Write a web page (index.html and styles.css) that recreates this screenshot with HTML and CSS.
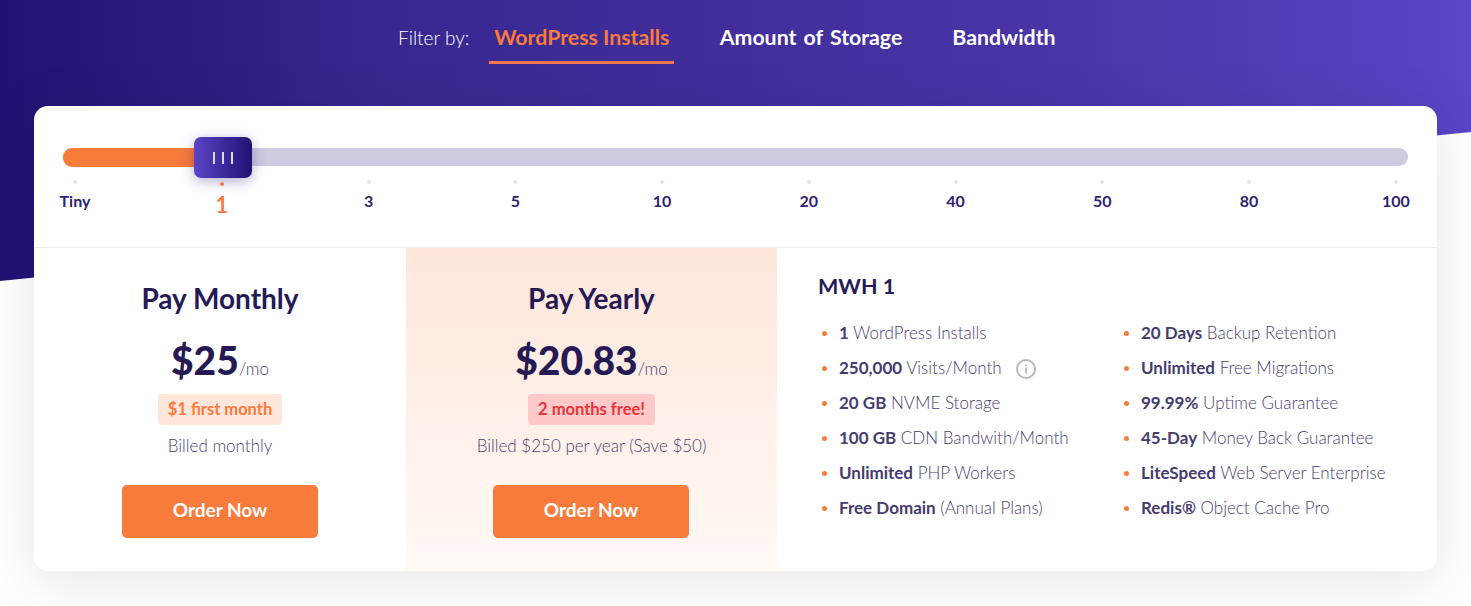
FILE: index.html
```html
<!DOCTYPE html>
<html lang="en">
<head>
<meta charset="utf-8">
<title>Plans</title>
<link rel="stylesheet" href="styles.css">
</head>
<body>
<div class="banner"></div>
<main class="page">
  <nav class="filters">
    <span class="filter-label">Filter by:</span>
    <a class="tab tab-active">WordPress Installs</a>
    <a class="tab">Amount of Storage</a>
    <a class="tab">Bandwidth</a>
  </nav>
  <section class="card">
    <div class="slider">
      <div class="track">
        <div class="fill"></div>
        <div class="handle"><i></i><i></i><i></i></div>
      </div>
      <ul class="ticks">
        <li class="tick"><b></b>Tiny</li>
        <li class="tick tick-active"><b></b><span>1</span></li>
        <li class="tick"><b></b>3</li>
        <li class="tick"><b></b>5</li>
        <li class="tick"><b></b>10</li>
        <li class="tick"><b></b>20</li>
        <li class="tick"><b></b>40</li>
        <li class="tick"><b></b>50</li>
        <li class="tick"><b></b>80</li>
        <li class="tick"><b></b>100</li>
      </ul>
    </div>
    <div class="plans">
      <div class="plan">
        <h2>Pay Monthly</h2>
        <p class="price"><strong>$25</strong><span>/mo</span></p>
        <p class="badge badge-orange">$1 first month</p>
        <p class="billed">Billed monthly</p>
        <a class="order">Order Now</a>
      </div>
      <div class="plan plan-yearly">
        <h2>Pay Yearly</h2>
        <p class="price"><strong>$20.83</strong><span>/mo</span></p>
        <p class="badge badge-red">2 months free!</p>
        <p class="billed">Billed $250 per year (Save $50)</p>
        <a class="order">Order Now</a>
      </div>
      <div class="features">
        <h3>MWH 1</h3>
        <div class="feature-cols">
          <ul class="feature-list">
            <li><b>1</b> WordPress Installs</li>
            <li><b>250,000</b> Visits/Month<svg class="info" viewBox="0 0 20 20" width="20" height="20" aria-hidden="true"><circle cx="10" cy="10" r="9" fill="none" stroke="#b9b9b9" stroke-width="2"/><rect x="9.1" y="8.6" width="1.8" height="6" fill="#b9b9b9"/><rect x="9.1" y="5.4" width="1.8" height="1.8" fill="#b9b9b9"/></svg></li>
            <li><b>20 GB</b> NVME Storage</li>
            <li><b>100 GB</b> CDN Bandwith/Month</li>
            <li><b>Unlimited</b> PHP Workers</li>
            <li><b>Free Domain</b> (Annual Plans)</li>
          </ul>
          <ul class="feature-list">
            <li><b>20 Days</b> Backup Retention</li>
            <li><b>Unlimited</b> Free Migrations</li>
            <li><b>99.99%</b> Uptime Guarantee</li>
            <li><b>45-Day</b> Money Back Guarantee</li>
            <li><b>LiteSpeed</b> Web Server Enterprise</li>
            <li><b>Redis®</b> Object Cache Pro</li>
          </ul>
        </div>
      </div>
    </div>
  </section>
</main>
</body>
</html>
```
FILE: styles.css
```css
* { box-sizing: border-box; }
html, body { margin: 0; padding: 0; }
body {
  position: relative;
  width: 100%;
  height: 606px;
  overflow: hidden;
  background: #fff;
  font-family: Lato, "Noto Sans", sans-serif;
  color: #261a55;
}
ul { list-style: none; margin: 0; padding: 0; }
p, h2, h3 { margin: 0; }

.banner {
  position: absolute;
  inset: 0 0 auto 0;
  height: 283px;
  background: linear-gradient(90deg, #1f1274 0%, #38278f 26%, #4a35a8 73%, #5b44c6 100%);
  clip-path: polygon(0 0, 100% 0, 100% 132px, 0 281px);
}
.page {
  position: relative;
  padding: 0 34px;
}
.filters {
  display: flex;
  align-items: flex-start;
  justify-content: flex-start;
  height: 106px;
  padding: 16px 0 0 364px;
  color: #fff;
}
.filter-label {
  font-size: 19px;
  line-height: 43px;
  margin-right: 20px;
  font-weight: 300;
}
.tab {
  height: 48px;
  padding: 0 4.5px;
  margin-right: 41px;
  font-size: 21.3px;
  word-spacing: 2px;
  line-height: 43px;
  font-weight: 700;
  color: #fff;
}
.tab-active {
  width: 185px;
  padding: 0 5px;
  word-spacing: 0;
  white-space: nowrap;
  color: #fb7a3c;
  border-bottom: 3px solid #f4784a;
}

.card {
  width: 1403px;
  height: 465px;
  background: #fff;
  border-radius: 14px;
  box-shadow: 0 10px 60px rgba(0, 0, 0, .1);
  overflow: hidden;
}
.slider {
  height: 142px;
  padding: 42px 21px 0;
  border-bottom: 1px solid #ececf0;
}
.track {
  position: relative;
  height: 18px;
  margin: 0 8px;
  border-radius: 9px;
  background: #cfcadf;
}
.fill {
  width: 135px;
  height: 19px;
  background: #f87b3c;
  border-radius: 9px 0 0 9px;
}
.handle {
  position: absolute;
  left: 131px;
  top: -11px;
  width: 58px;
  height: 41px;
  border-radius: 7px;
  background: linear-gradient(90deg, #5b44c6, #1f1274);
  box-shadow: 0 3px 14px rgba(31, 18, 116, .35);
  display: flex;
  align-items: center;
  justify-content: center;
  gap: 7px;
}
.handle i {
  width: 2px;
  height: 12px;
  background: #dcd8ee;
}
.ticks {
  display: flex;
  justify-content: space-between;
  width: 1361px;
  margin-top: 14px;
}
.tick {
  position: relative;
  width: 40px;
  display: flex;
  flex-direction: column;
  align-items: center;
  font-size: 16px;
  font-weight: 700;
  line-height: 20px;
  color: #2f2270;
  white-space: nowrap;
}
.tick b {
  width: 4px;
  height: 4px;
  border-radius: 50%;
  background: #e4e1f2;
  margin-bottom: 7px;
}
.tick-active b {
  background: #f4784a;
  margin-top: 2px;
  margin-bottom: 7px;
}
.tick-active span {
  font-size: 22px;
  font-weight: 700;
  line-height: 24px;
  color: #fa7b45;
}

.plans {
  display: flex;
  height: 323px;
}
.plan {
  width: 372px;
  display: flex;
  flex-direction: column;
  align-items: center;
  padding-top: 32px;
}
.plan-yearly {
  width: 371px;
  background: linear-gradient(180deg, #ffe6db 0%, #fff9f5 100%);
}
.plan-yearly .order { margin-right: 1px; }
.plan h2 {
  font-size: 28px;
  line-height: 36px;
  font-weight: 700;
  color: #261a55;
}
.price {
  display: flex;
  align-items: baseline;
  margin-top: 21px;
  line-height: 46px;
}
.price strong {
  font-size: 39px;
  font-weight: 900;
  color: #261a55;
}
.price span {
  font-size: 17px;
  font-weight: 300;
  color: #4a4170;
}
.badge {
  margin-top: 2px;
  height: 31px;
  padding: 0 10px;
  border-radius: 4px;
  font-size: 16.5px;
  font-weight: 700;
  line-height: 30px;
}
.badge-orange { background: #ffe6db; color: #fb7a3c; }
.badge-red { background: #ffc9c9; color: #e8333c; }
.billed {
  margin-top: 10px;
  font-size: 17px;
  line-height: 22px;
  font-weight: 300;
  color: #4a4170;
}
.order {
  width: 196px;
  height: 53px;
  margin-top: 28px;
  border-radius: 5px;
  background: #f87b3c;
  color: #fff;
  font-size: 19px;
  font-weight: 700;
  line-height: 50px;
  text-align: center;
}
.features {
  flex: 1;
  padding: 21px 0 0 41px;
}
.features h3 {
  font-size: 21.5px;
  line-height: 34px;
  font-weight: 700;
  color: #261a55;
}
.feature-cols {
  display: flex;
  margin-top: 12px;
}
.feature-list { width: 302px; margin-left: 1px; margin-right: -1px; }
.feature-list li {
  position: relative;
  height: 35px;
  padding-left: 20px;
  font-size: 17px;
  line-height: 35px;
  font-weight: 300;
  color: #4a4170;
  white-space: nowrap;
}
.feature-list li::before {
  content: "";
  position: absolute;
  left: 3px;
  top: 16px;
  width: 5px;
  height: 5px;
  border-radius: 50%;
  background: #f97c3c;
}
.feature-list b {
  font-weight: 700;
  color: #463c6e;
}
.info { margin: -2px 0 0 14px; vertical-align: middle; }
```
